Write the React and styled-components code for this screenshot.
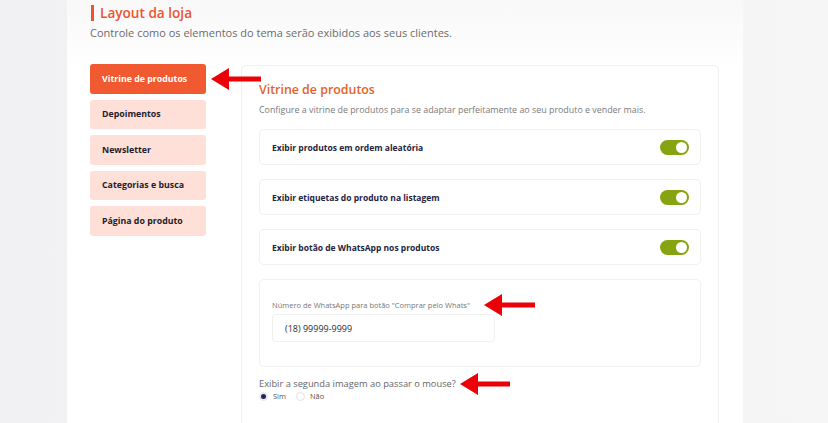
import React, { useState } from "react";
import styled, { createGlobalStyle } from "styled-components";

const GlobalStyle = createGlobalStyle`
  html, body {
    margin: 0;
    padding: 0;
  }
  body {
    background: linear-gradient(90deg, #f1f1f3 0%, #f6f6f7 100%);
    font-family: "Open Sans", "Liberation Sans", sans-serif;
    height: 423px;
    overflow: hidden;
  }
`;

const Panel = styled.div`
  margin-left: 67px;
  width: 676px;
  height: 423px;
  box-sizing: border-box;
  padding: 3px 24px 0 23px;
  background: linear-gradient(180deg, #f8f8f8 0%, #ffffff 70px);
`;

const Header = styled.div`
  .title {
    display: flex;
    align-items: center;
    gap: 6px;
    height: 20px;
    color: #ea5430;
    font-size: 13.6px;
    font-weight: 600;
    line-height: 18px;
  }

  .bar {
    width: 3px;
    height: 16px;
    margin-left: 1px;
    background: #ea5430;
  }

  .subtitle {
    margin-top: 3px;
    color: #6b6b6b;
    font-size: 11px;
    line-height: 14px;
  }
`;

const Body = styled.div`
  display: flex;
  align-items: flex-start;
  gap: 35px;
  margin-top: 24px;
`;

const Sidebar = styled.div`
  width: 116px;
  display: flex;
  flex-direction: column;
  gap: 6px;
`;

const MenuItem = styled.div`
  position: relative;
  height: 29.5px;
  display: flex;
  align-items: center;
  padding-left: 12px;
  border-radius: 3px;
  font-size: 8.8px;
  font-weight: 700;
  background: ${(p) => (p.active ? "#f15a31" : "#fee0d8")};
  color: ${(p) => (p.active ? "#ffffff" : "#1d1d2b")};
`;

const Card = styled.div`
  margin-top: 1px;
  width: 478px;
  height: 400px;
  box-sizing: border-box;
  border: 1px solid #efefef;
  border-radius: 5px;
  padding: 15px 17px 0 17px;

  h2 {
    margin: 0;
    color: #e2622b;
    font-size: 12.4px;
    font-weight: 600;
    line-height: 18px;
  }

  .desc {
    margin: 4px 0 12px;
    color: #7a7a7a;
    font-size: 8.9px;
    line-height: 14px;
  }
`;

const Box = styled.div`
  border: 1px solid #f0f0f0;
  border-radius: 5px;
  box-sizing: border-box;
  margin-bottom: 14px;
`;

const ToggleRow = styled(Box)`
  height: 36px;
  display: flex;
  align-items: center;
  justify-content: space-between;
  padding: 0 11px 0 12px;
  color: #23233f;
  font-size: 8.5px;
  font-weight: 700;
`;

const Switch = styled.div`
  width: 29px;
  height: 15px;
  border-radius: 8px;
  background: ${(p) => (p.on ? "#86a412" : "#cfcfcf")};
  display: flex;
  align-items: center;
  justify-content: ${(p) => (p.on ? "flex-end" : "flex-start")};
  padding: 0 2px;
  box-sizing: border-box;

  &::after {
    content: "";
    width: 11px;
    height: 11px;
    border-radius: 50%;
    background: #fff;
  }
`;

const FieldBox = styled(Box)`
  height: 88px;
  margin-bottom: 10px;
  padding: 20px 12px 0;
  display: flex;
  flex-direction: column;
  align-items: flex-start;

  label {
    position: relative;
    color: #777;
    font-size: 7.5px;
    line-height: 10px;
  }

  .input {
    margin-top: 4px;
    width: 223px;
    height: 28px;
    box-sizing: border-box;
    border: 1px solid #f0f0f0;
    border-radius: 4px;
    display: flex;
    align-items: center;
    padding-left: 12px;
    color: #2a2a3a;
    font-size: 9px;
  }
`;

const Question = styled.div`
  display: flex;
  flex-direction: column;
  align-items: flex-start;

  .q {
    position: relative;
    color: #666;
    font-size: 9.3px;
    line-height: 14px;
  }

  .options {
    display: flex;
    gap: 10px;
  }
`;

const Radio = styled.label`
  display: flex;
  align-items: center;
  gap: 5px;
  color: #555;
  font-size: 7.5px;
  line-height: 10px;

  .dot {
    width: 9px;
    height: 9px;
    border-radius: 50%;
    box-sizing: border-box;
    border: ${(p) => (p.checked ? "2px solid #e8e8f2" : "1px solid #e2e2e2")};
    background: ${(p) => (p.checked ? "#23235a" : "#fff")};
  }
`;

const Arrow = styled.svg`
  position: absolute;
  top: 50%;
  left: calc(100% + ${(p) => p.gap}px);
  transform: translateY(-50%);
  overflow: visible;
`;

const RedArrow = ({ gap = 6, length = 50 }) => (
  <Arrow gap={gap} width={length} height="24" viewBox={`0 0 ${length} 24`}>
    <path d={`M0 12 L18 1 L18 9.5 L${length} 9.5 L${length} 14.5 L18 14.5 L18 23 Z`} fill="#ec0007" />
  </Arrow>
);

const menu = ["Vitrine de produtos", "Depoimentos", "Newsletter", "Categorias e busca", "Página do produto"];

const toggles = [
  "Exibir produtos em ordem aleatória",
  "Exibir etiquetas do produto na listagem",
  "Exibir botão de WhatsApp nos produtos",
];

export default function App() {
  const [hover, setHover] = useState(true);

  return (
    <>
      <GlobalStyle />
      <Panel>
        <Header>
          <div className="title">
            <span className="bar" />
            Layout da loja
          </div>
          <div className="subtitle">Controle como os elementos do tema serão exibidos aos seus clientes.</div>
        </Header>
        <Body>
          <Sidebar>
            {menu.map((m, i) => (
              <MenuItem key={m} active={i === 0}>
                {m}
                {i === 0 && <RedArrow gap={5} length={50} />}
              </MenuItem>
            ))}
          </Sidebar>
          <Card>
            <h2>Vitrine de produtos</h2>
            <div className="desc">
              Configure a vitrine de produtos para se adaptar perfeitamente ao seu produto e vender mais.
            </div>
            {toggles.map((t) => (
              <ToggleRow key={t}>
                {t}
                <Switch on />
              </ToggleRow>
            ))}
            <FieldBox>
              <label>
                Número de WhatsApp para botão "Comprar pelo Whats"
                <RedArrow gap={14} length={51} />
              </label>
              <div className="input">(18) 99999-9999</div>
            </FieldBox>
            <Question>
              <div className="q">
                Exibir a segunda imagem ao passar o mouse?
                <RedArrow gap={4} length={50} />
              </div>
              <div className="options">
                <Radio checked={hover} onClick={() => setHover(true)}>
                  <span className="dot" />
                  Sim
                </Radio>
                <Radio checked={!hover} onClick={() => setHover(false)}>
                  <span className="dot" />
                  Não
                </Radio>
              </div>
            </Question>
          </Card>
        </Body>
      </Panel>
    </>
  );
}
